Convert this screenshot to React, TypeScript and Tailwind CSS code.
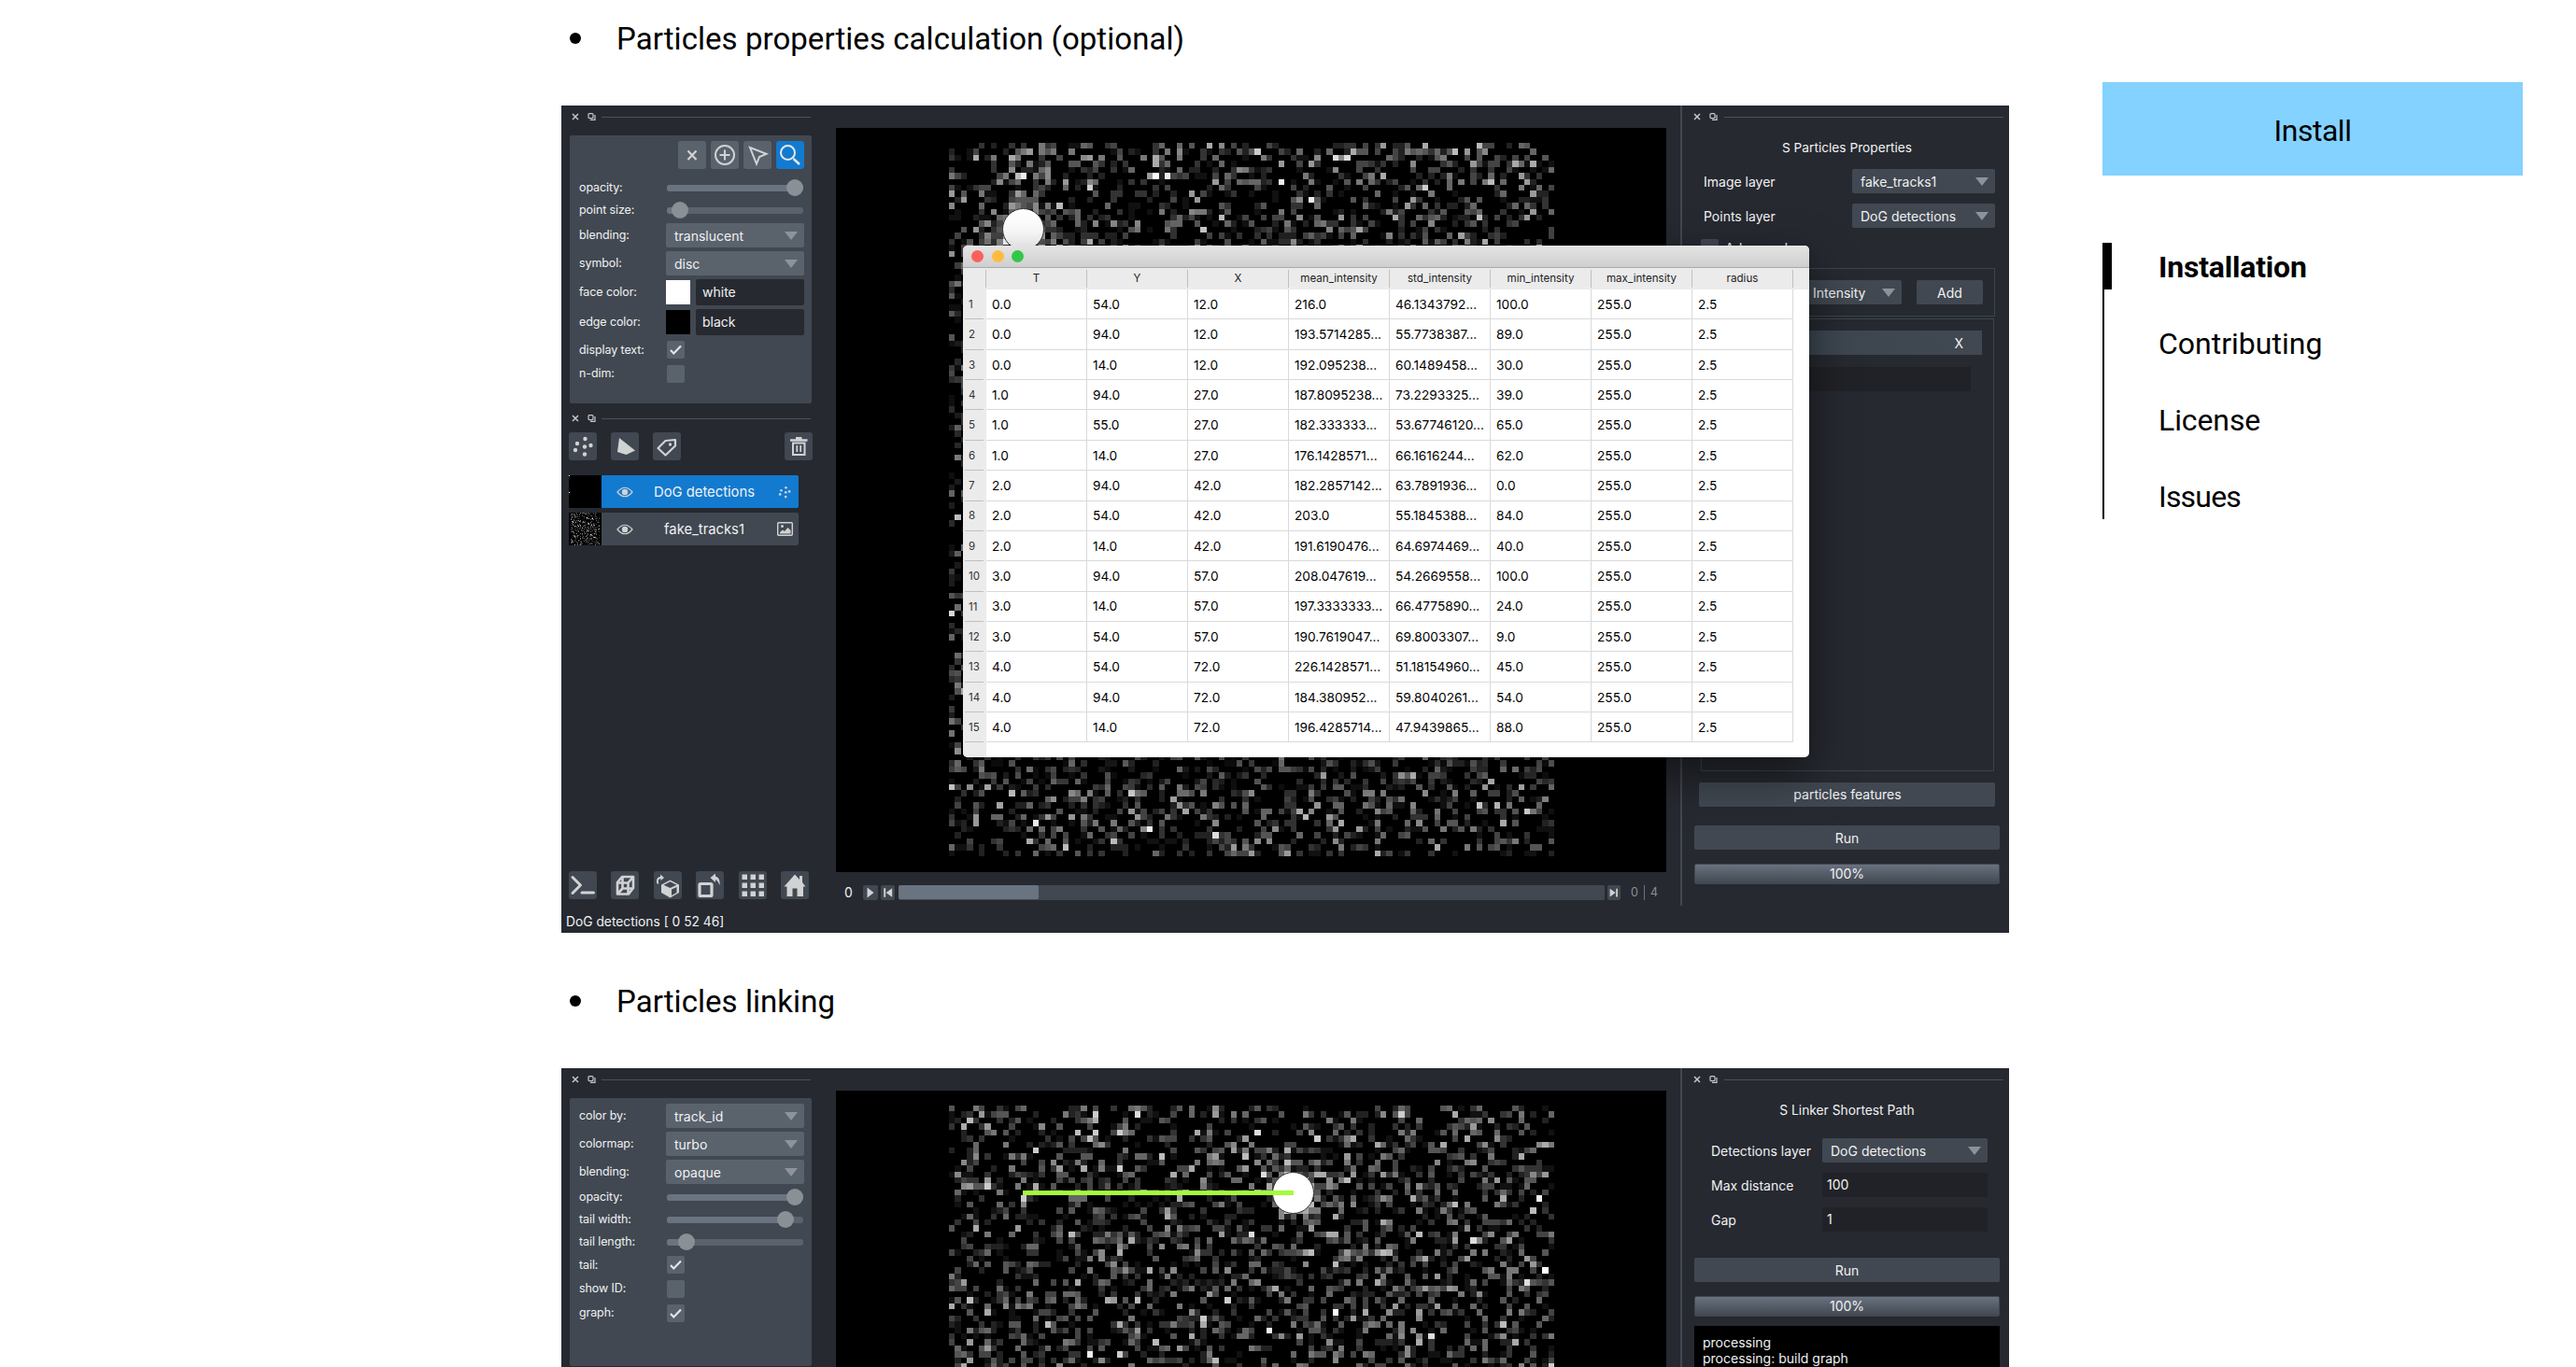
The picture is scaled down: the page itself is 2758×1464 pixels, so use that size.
import React from "react";

/* ---------- noise image ---------- */

function mulberry(seed: number) {
  let a = seed;
  return () => {
    a = (a + 0x6d2b79f5) | 0;
    let t = Math.imul(a ^ (a >>> 15), 1 | a);
    t = (t + Math.imul(t ^ (t >>> 7), 61 | t)) ^ t;
    return ((t ^ (t >>> 14)) >>> 0) / 4294967296;
  };
}

type Spot = [number, number];

function Noise({ seed, cols, rows, spots, className }: { seed: number; cols: number; rows: number; spots: Spot[]; className: string }) {
  const rand = mulberry(seed);
  const levels: string[] = Array.from({ length: 16 }, () => "");
  for (let y = 0; y < rows; y++) {
    for (let x = 0; x < cols; x++) {
      const n = Math.sqrt(-2 * Math.log(rand() + 1e-9)) * Math.cos(2 * Math.PI * rand());
      let v = n * 74 + 4;
      for (const [sx, sy] of spots) {
        const d2 = (x - sx) ** 2 + (y - sy) ** 2;
        v += 210 * Math.exp(-d2 / 16);
      }
      const l = Math.min(15, Math.floor(v / 16));
      if (l > 0) levels[l] += `M${x} ${y}h1v1h-1z`;
    }
  }
  return (
    <svg className={className} viewBox={`0 0 ${cols} ${rows}`} preserveAspectRatio="none" shapeRendering="crispEdges">
      {levels.map((d, i) => (d ? <path key={i} d={d} fill={`rgb(${i * 17},${i * 17},${i * 17})`} /> : null))}
    </svg>
  );
}

/* ---------- icons, all on a 30 x 30 grid ---------- */

const I = "block size-[30px] shrink-0";
const FG = "#d1d2d4";

const CrossIcon = () => (
  <svg className={I} viewBox="0 0 30 30"><path d="M10.500 10.500l9 9.500M19.500 10.500l-9 9.500" stroke={FG} strokeWidth="2.200" fill="none" /></svg>
);
const PlusIcon = () => (
  <svg className={I} viewBox="0 0 30 30"><circle cx="15" cy="15" r="10" stroke={FG} strokeWidth="2" fill="none" /><path d="M15 9.500v11M9.500 15h11" stroke={FG} strokeWidth="2" /></svg>
);
const ArrowIcon = () => (
  <svg className={I} viewBox="0 0 30 30"><path d="M7 7l17.500 6.800-7.500 3.200-3 7.500z" stroke={FG} strokeWidth="2" fill="none" /></svg>
);
const SearchIcon = () => (
  <svg className={I} viewBox="0 0 30 30"><circle cx="12.500" cy="12.500" r="7.500" stroke="#e8e9ea" strokeWidth="2" fill="none" /><path d="M18.500 19l6.500 6" stroke="#e8e9ea" strokeWidth="2.400" /></svg>
);
const DotsIcon = ({ size = I }: { size?: string }) => (
  <svg className={size} viewBox="0 0 30 30" fill={FG}>
    <circle cx="17.500" cy="7" r="2.200" /><circle cx="9" cy="12" r="2.200" /><circle cx="17" cy="15.500" r="2.200" />
    <circle cx="23.500" cy="14" r="2.200" /><circle cx="7" cy="19" r="2.200" /><circle cx="17" cy="23.500" r="2.200" />
  </svg>
);
const ShapeIcon = () => (
  <svg className={I} viewBox="0 0 30 30"><path d="M9 6L26 19.500 16.500 24 7 21z" fill={FG} /></svg>
);
const TagIcon = () => (
  <svg className={I} viewBox="0 0 30 30"><path d="M5.500 17L13.500 9l10.500-1v6.500L13.500 24.500z" stroke={FG} strokeWidth="2.200" fill="none" strokeLinejoin="round" /><circle cx="18.500" cy="13" r="1.700" fill={FG} /></svg>
);
const TrashIcon = () => (
  <svg className={I} viewBox="0 0 30 30" fill="none" stroke={FG}><path d="M6 8.500h18.500M12 6.300h6.500" strokeWidth="2.400" /><path d="M9 11.500h12.500v12.500h-12.500z" strokeWidth="2" /><path d="M13.300 14v7M17.200 14v7" strokeWidth="1.800" /></svg>
);
const ConsoleIcon = () => (
  <svg className={I} viewBox="0 0 30 30" fill="none" stroke={FG} strokeWidth="3"><path d="M4 6.500l8.500 8.500L4 23.500M14 23h12.500" strokeLinecap="round" strokeLinejoin="round" /></svg>
);
const Cube3dIcon = () => (
  <svg className={I} viewBox="0 0 30 30" fill="none" stroke={FG} strokeWidth="2.600" strokeLinejoin="round"><path d="M7 12L12 6h12v12l-5 6.500H7zM7 12.500h11.500v12M18.500 12.500L24 6M12.500 6v12.500H24M12.500 18.500L7 24.500" /></svg>
);
const RollIcon = () => (
  <svg className={I} viewBox="0 0 30 30"><path d="M8 14.500l9.500-5 9.500 5v8.500L17.500 28.500 8 23z" fill={FG} /><path d="M10.500 14.800l7-3.500 7 3.500-7 3.300z" fill="#414851" /><path d="M19 19.500l5.500-2.500v6L19 26z" fill="#414851" /><path d="M3.500 13.500C2 9 4 6 7 6V3.500L11 7 7.500 10V8C5 8.500 4.200 10 5.500 13.500z" fill={FG} /></svg>
);
const TransposeIcon = () => (
  <svg className={I} viewBox="0 0 30 30"><rect x="4" y="13.500" width="13" height="13" rx="1" stroke={FG} strokeWidth="3.200" fill="none" /><path d="M15.500 7L21 2.500v3c4 1 5 5 4.500 9.500C24 11.500 23 9.500 21 9v3z" fill={FG} /></svg>
);
const GridIcon = () => (
  <svg className={I} viewBox="0 0 30 30" fill={FG}>
    {[3.5, 12.5, 21.5].map((y) => [3.5, 12.5, 21.5].map((x) => <rect key={`${x}-${y}`} x={x} y={y} width="5.500" height="5.500" />))}
  </svg>
);
const HomeIcon = () => (
  <svg className={I} viewBox="0 0 30 30"><path d="M15 3.500l5 5.500V5h3v7l3.500 4.500H24V27h-6.500v-8.500h-5V27H6.500V16.500H3.500z" fill={FG} /></svg>
);
const EyeIcon = () => (
  <svg className="block h-[12px] w-[18px]" viewBox="0 0 18 12"><path d="M1 6Q9-3.500 17 6 9 15.500 1 6z" fill="none" stroke={FG} strokeWidth="1.200" /><circle cx="9" cy="6" r="3.200" fill={FG} /></svg>
);
const ImageIcon = () => (
  <svg className="block h-[15px] w-[17px]" viewBox="0 0 17 15"><rect x=".7" y=".7" width="15.600" height="13.600" rx="1" fill="none" stroke={FG} strokeWidth="1.400" /><path d="M3 12.500V11l3-2.500 2 1.500 3.500-4L14.500 9v3.500z" fill={FG} /><circle cx="5.500" cy="4.500" r="1.500" fill={FG} /></svg>
);
const Check = ({ on }: { on?: boolean }) => (
  <div className="ml-px size-[19px] rounded-[2px] bg-[#5a626c]">
    {on && <svg className="block size-[19px]" viewBox="0 0 19 19"><path d="M4 10l3.300 3.500L15 5.500" fill="none" stroke="#e4e5e6" strokeWidth="2.200" /></svg>}
  </div>
);

/* ---------- shared widgets ---------- */

function DockTitle({ className, line }: { className: string; line: string }) {
  return (
    <div className={`flex h-[24px] items-center ${className}`}>
      <svg className="block h-[10px] w-[30px] shrink-0" viewBox="0 0 30 10" fill="none" stroke="#c6c8ca">
        <path d="M1 2l6 6M7 2l-6 6" strokeWidth="1.500" />
        <rect x="18" y="1.600" width="5" height="5" rx="1" strokeWidth="1.200" />
        <path d="M20 8.400h5v-5.400" strokeWidth="1.200" />
      </svg>
      <div className={`h-px bg-[#4a515b] ${line}`} />
    </div>
  );
}

function Select({ children, className }: { children: React.ReactNode; className: string }) {
  return (
    <div className={`flex h-[26px] items-center justify-between rounded-[2px] pl-[9px] pr-[7px] text-[14px] ${className}`}>
      <span className="pt-px">{children}</span>
      <svg className="block h-[9px] w-[14px]" viewBox="0 0 14 9"><path d="M0 0h14L7 9z" fill="#8e9399" /></svg>
    </div>
  );
}

function Slider({ fill }: { fill: string }) {
  return (
    <div className="ml-px flex h-[7px] w-[146px] items-center rounded-[3px] bg-[#5a626c]">
      <div className={`h-[7px] rounded-l-[3px] bg-[#6a7380] ${fill}`} />
      <div className="-ml-[9px] size-[18px] shrink-0 rounded-full bg-[#899096]" />
    </div>
  );
}

function Field({ label, h, children }: { label: string; h: string; children: React.ReactNode }) {
  return (
    <div className={`flex items-center pl-[10px] ${h}`}>
      <span className="w-[93px] pt-px text-[12.500px] tracking-[-0.100px]">{label}</span>
      {children}
    </div>
  );
}

function ColorInput({ swatch, name }: { swatch: string; name: string }) {
  return (
    <>
      <div className={`size-[26px] ${swatch}`} />
      <div className="ml-[6px] flex h-[28px] w-[116px] items-center rounded-[2px] bg-[#262930] pl-[7px] text-[14px]">{name}</div>
    </>
  );
}

function Tool({ children, className = "" }: { children: React.ReactNode; className?: string }) {
  return <div className={`size-[30px] shrink-0 rounded-[3px] ${className}`}>{children}</div>;
}

function AppFrame({ children, className = "h-[886px]" }: { children: React.ReactNode; className?: string }) {
  return <div className={`relative flex w-[1550px] shrink-0 bg-[#262930] font-['Inter',sans-serif] leading-none text-[#f0f1f2] ${className}`}>{children}</div>;
}

/* ---------- result table ---------- */

const heads = ["T", "Y", "X", "mean_intensity", "std_intensity", "min_intensity", "max_intensity", "radius"];
const data = [
  ["0.0", "54.0", "12.0", "216.0", "46.1343792...", "100.0"],
  ["0.0", "94.0", "12.0", "193.5714285...", "55.7738387...", "89.0"],
  ["0.0", "14.0", "12.0", "192.095238...", "60.1489458...", "30.0"],
  ["1.0", "94.0", "27.0", "187.8095238...", "73.2293325...", "39.0"],
  ["1.0", "55.0", "27.0", "182.333333...", "53.67746120...", "65.0"],
  ["1.0", "14.0", "27.0", "176.1428571...", "66.1616244...", "62.0"],
  ["2.0", "94.0", "42.0", "182.2857142...", "63.7891936...", "0.0"],
  ["2.0", "54.0", "42.0", "203.0", "55.1845388...", "84.0"],
  ["2.0", "14.0", "42.0", "191.6190476...", "64.6974469...", "40.0"],
  ["3.0", "94.0", "57.0", "208.047619...", "54.2669558...", "100.0"],
  ["3.0", "14.0", "57.0", "197.3333333...", "66.4775890...", "24.0"],
  ["3.0", "54.0", "57.0", "190.7619047...", "69.8003307...", "9.0"],
  ["4.0", "54.0", "72.0", "226.1428571...", "51.18154960...", "45.0"],
  ["4.0", "94.0", "72.0", "184.380952...", "59.8040261...", "54.0"],
  ["4.0", "14.0", "72.0", "196.4285714...", "47.9439865...", "88.0"],
];

function TableWindow() {
  return (
    <div className="absolute left-[430px] top-[150px] h-[548px] w-[906px] overflow-hidden rounded-[5px] bg-white text-black">
      <div className="flex h-[24px] items-center gap-[8.500px] border-b border-[#a9a9a9] bg-linear-to-b from-[#e4e4e4] to-[#cfcfcf] pl-[9px]">
        <div className="size-[13px] rounded-full bg-[#fc605c]" />
        <div className="size-[13px] rounded-full bg-[#fdbc40]" />
        <div className="size-[13px] rounded-full bg-[#33c748]" />
      </div>
      <div className="flex h-[23px] items-center bg-[#ebebeb] pl-[24px] text-[11.600px] text-[#222]">
        {heads.map((h) => (
          <div key={h} className="flex h-[19px] w-[108px] items-center justify-center border-l border-[#c0c0c0] pt-px">{h}</div>
        ))}
        <div className="h-[19px] border-l border-[#c0c0c0]" />
      </div>
      {data.map((r, i) => (
        <div key={i} className="flex h-[32.360px]">
          <div className="flex w-[25px] items-center justify-start bg-[#ebebeb] pl-[2px]">
            <div className="flex h-full w-[20px] items-center border-b border-[#c0c0c0] pl-[4px] pt-[2px] text-[11.500px] text-[#333]">{i + 1}</div>
          </div>
          {[...r, "255.0", "2.5"].map((c, j) => (
            <div key={j} className="flex w-[108px] items-center border-b border-r border-[#dadada] pl-[6px] pt-[2px] text-[13.700px]">{c}</div>
          ))}
        </div>
      ))}
      <div className="h-[20px] w-[25px] bg-[#ebebeb]" />
    </div>
  );
}

/* ---------- left docks ---------- */

function LeftDockPoints() {
  return (
    <div className="flex w-[294px] shrink-0 flex-col">
      <DockTitle className="pl-[11px]" line="ml-[2px] w-[224px]" />
      <div className="ml-[9px] mt-[8px] h-[287px] w-[259px] shrink-0 rounded-[2px] bg-[#414851]">
        <div className="flex justify-end gap-[5px] pr-[8px] pt-[6px]">
          <Tool className="bg-[#5a626c]"><CrossIcon /></Tool>
          <Tool className="bg-[#5a626c]"><PlusIcon /></Tool>
          <Tool className="bg-[#5a626c]"><ArrowIcon /></Tool>
          <Tool className="bg-[#127acf]"><SearchIcon /></Tool>
        </div>
        <div className="mt-[8px]">
          <Field label="opacity:" h="h-[24px]"><Slider fill="w-[137px]" /></Field>
          <Field label="point size:" h="h-[24px]"><Slider fill="w-[14px]" /></Field>
          <Field label="blending:" h="h-[30px]"><Select className="w-[148px] bg-[#5a626c]">translucent</Select></Field>
          <Field label="symbol:" h="h-[30px]"><Select className="w-[148px] bg-[#5a626c]">disc</Select></Field>
          <Field label="face color:" h="h-[32px]"><ColorInput swatch="bg-white" name="white" /></Field>
          <Field label="edge color:" h="h-[32px]"><ColorInput swatch="bg-black" name="black" /></Field>
          <Field label="display text:" h="h-[27px]"><Check on /></Field>
          <Field label="n-dim:" h="h-[24px]"><Check /></Field>
        </div>
      </div>
      <DockTitle className="mt-[4px] pl-[11px]" line="ml-[2px] w-[224px]" />
      <div className="ml-[8px] mt-[3px] flex w-[261px] gap-[15px]">
        <Tool className="bg-[#414851]"><DotsIcon /></Tool>
        <Tool className="bg-[#414851]"><ShapeIcon /></Tool>
        <Tool className="bg-[#414851]"><TagIcon /></Tool>
        <Tool className="ml-auto bg-[#414851]"><TrashIcon /></Tool>
      </div>
      <div className="ml-[8px] mt-[16px] flex w-[246px] flex-col gap-[5px] text-[14.800px]">
        <div className="flex h-[35px]">
          <div className="w-[35px] bg-black"><div className="size-px bg-white" /><div className="mt-[17px] size-px bg-white" /></div>
          <div className="flex flex-1 items-center rounded-r-[2px] bg-[#127acf] pl-[16px] pr-[6px]">
            <EyeIcon />
            <span className="flex-1 pr-px pt-px text-center">DoG detections</span>
            <DotsIcon size="block size-[18px]" />
          </div>
        </div>
        <div className="flex h-[35px]">
          <div className="w-[35px] bg-black px-[2px]"><Noise seed={5} cols={31} rows={35} spots={[]} className="block h-[35px] w-[31px]" /></div>
          <div className="flex flex-1 items-center rounded-r-[2px] bg-[#414851] pl-[16px] pr-[6px]">
            <EyeIcon />
            <span className="flex-1 pr-[2px] pt-px text-center">fake_tracks1</span>
            <ImageIcon />
          </div>
        </div>
      </div>
      <div className="ml-[8px] mt-auto flex gap-[15.400px]">
        <Tool className="bg-[#414851]"><ConsoleIcon /></Tool>
        <Tool className="bg-[#414851]"><Cube3dIcon /></Tool>
        <Tool className="bg-[#414851]"><RollIcon /></Tool>
        <Tool className="bg-[#414851]"><TransposeIcon /></Tool>
        <Tool className="bg-[#414851]"><GridIcon /></Tool>
        <Tool className="bg-[#414851]"><HomeIcon /></Tool>
      </div>
      <div className="flex h-[36px] items-center pl-[5px] pt-[13px] text-[13.800px]">DoG detections [ 0 52 46]</div>
    </div>
  );
}

function LeftDockTracks() {
  return (
    <div className="flex w-[294px] shrink-0 flex-col">
      <DockTitle className="pl-[11px]" line="ml-[2px] w-[224px]" />
      <div className="ml-[9px] mt-[8px] h-[287px] w-[259px] rounded-[2px] bg-[#414851] pt-[4px]">
        <Field label="color by:" h="h-[30px]"><Select className="w-[148px] bg-[#5a626c]">track_id</Select></Field>
        <Field label="colormap:" h="h-[30px]"><Select className="w-[148px] bg-[#5a626c]">turbo</Select></Field>
        <Field label="blending:" h="h-[30px]"><Select className="w-[148px] bg-[#5a626c]">opaque</Select></Field>
        <Field label="opacity:" h="h-[24px]"><Slider fill="w-[137px]" /></Field>
        <Field label="tail width:" h="h-[24px]"><Slider fill="w-[127px]" /></Field>
        <Field label="tail length:" h="h-[24px]"><Slider fill="w-[21px]" /></Field>
        <Field label="tail:" h="h-[25px]"><Check on /></Field>
        <Field label="show ID:" h="h-[26px]"><Check /></Field>
        <Field label="graph:" h="h-[26px]"><Check on /></Field>
      </div>
    </div>
  );
}

/* ---------- right docks ---------- */

function RightDockProperties() {
  return (
    <div className="flex w-[349px] shrink-0 flex-col text-[14px]">
      <DockTitle className="pl-[11px]" line="ml-[3px] w-[299px]" />
      <div className="mt-[9px] flex h-[24px] items-center justify-center pl-[2px] pt-px text-[13.700px]">S Particles Properties</div>
      <div className="mt-[11px] flex items-center justify-between pl-[22px] pr-[15px]">
        <span className="pt-px">Image layer</span><Select className="w-[153px] bg-[#414851]">fake_tracks1</Select>
      </div>
      <div className="mt-[11px] flex items-center justify-between pl-[22px] pr-[15px]">
        <span className="pt-px">Points layer</span><Select className="w-[153px] bg-[#414851]">DoG detections</Select>
      </div>
      <div className="mt-[12px] flex items-center gap-[7px] pl-[19px]">
        <div className="size-[19px] rounded-[2px] bg-[#414851]" />
        <span>Advanced</span>
      </div>
      <div className="ml-[19px] mt-[12px] flex h-[52px] w-[315px] shrink-0 items-center justify-end gap-[16px] border border-[#3b454e] pr-[12px]">
        <Select className="w-[104px] bg-[#414851]">Intensity</Select>
        <div className="flex h-[26px] w-[71px] items-center justify-center rounded-[2px] bg-[#414851] pt-px">Add</div>
      </div>
      <div className="ml-[19px] mt-[2px] h-[485px] w-[314px] shrink-0 border border-[#3b454e]">
        <div className="mt-[12px] flex h-[26px] w-[300px] items-center justify-end bg-linear-to-r from-[#3a464f] to-[#414851] pr-[20px] pt-px">X</div>
        <div className="ml-[12px] mt-[13px] h-[26px] w-[276px] bg-[#212227]" />
      </div>
      <div className="ml-[17px] mt-[12px] flex h-[26px] w-[317px] shrink-0 items-center justify-center rounded-[2px] bg-[#414851] pl-px">particles features</div>
      <RunButtons className="mt-[20px]" />
    </div>
  );
}

function RunButtons({ className }: { className: string }) {
  return (
    <div className={`ml-[12px] w-[327px] ${className}`}>
      <div className="flex h-[26px] items-center justify-center rounded-[2px] bg-[#414851] pt-px">Run</div>
      <div className="mt-[15px] flex h-[22px] items-center justify-center rounded-[2px] border border-[#414851] bg-linear-to-b from-[#6a7280] to-[#414851]">100%</div>
    </div>
  );
}

function RightDockLinker() {
  return (
    <div className="flex w-[349px] shrink-0 flex-col text-[14px]">
      <DockTitle className="pl-[11px]" line="ml-[3px] w-[299px]" />
      <div className="mt-[9px] flex h-[24px] items-center justify-center pl-[2px] pt-px text-[13.800px]">S Linker Shortest Path</div>
      <div className="mt-[18px] flex items-center justify-between pl-[30px] pr-[23px]">
        <span className="pt-px">Detections layer</span><Select className="w-[177px] bg-[#414851]">DoG detections</Select>
      </div>
      <div className="mt-[11px] flex items-center justify-between pl-[30px] pr-[23px]">
        <span className="pt-px">Max distance</span><div className="flex h-[26px] w-[177px] items-center bg-[#212227] pl-[5px]">100</div>
      </div>
      <div className="mt-[11px] flex items-center justify-between pl-[30px] pr-[23px]">
        <span className="pt-px">Gap</span><div className="flex h-[26px] w-[177px] items-center bg-[#212227] pl-[5px]">1</div>
      </div>
      <RunButtons className="mt-[28px]" />
      <div className="ml-[12px] mt-[10px] w-[327px] flex-1 bg-black pl-[9px] pt-[9px] leading-[17px]">
        <div>processing</div>
        <div>processing: build graph</div>
      </div>
    </div>
  );
}

/* ---------- viewer ---------- */

const Mini = ({ d, className }: { d: string; className: string }) => (
  <div className={`h-[16px] rounded-[2px] bg-[#414851] ${className}`}>
    <svg className="block h-[16px] w-full" viewBox="0 0 16 16"><path d={d} fill="#d1d2d4" /></svg>
  </div>
);

function Canvas({ seed, spots, children }: { seed: number; spots: Spot[]; children: React.ReactNode }) {
  return (
    <div className="relative h-[797px] bg-black pl-[121px] pt-[16px]">
      <Noise seed={seed} cols={101} rows={119} spots={spots} className="block h-[764px] w-[648px]" />
      {children}
    </div>
  );
}

function FrameSlider() {
  return (
    <div className="mt-[14px] flex h-[16px] items-center text-[14px]">
      <span className="w-[29px] pl-[9px]">0</span>
      <Mini className="w-[16px]" d="M4.500 2.500l7 5.500-7 5.500z" />
      <Mini className="ml-[3px] w-[15px]" d="M3.500 3h2v10h-2zM13 3v10L6 8z" />
      <div className="ml-[4px] h-[16px] w-[756px] rounded-[2px] bg-[#414851]">
        <div className="h-[15px] w-[150px] rounded-[2px] bg-[#6a7380]" />
      </div>
      <Mini className="ml-[3px] w-[14px]" d="M12.500 3h-2v10h2zM3 3v10l7-5z" />
      <div className="flex items-center pl-[11px] text-[12.500px] text-[#8c9096]">
        <span>0</span><div className="mx-[6px] h-[16px] w-px bg-[#6a7280]" /><span>4</span>
      </div>
    </div>
  );
}

const Divider = ({ h = "h-[857px]" }: { h?: string }) => <div className={`ml-[15px] mr-[1px] w-[2px] shrink-0 bg-[#414851] ${h}`} />;

/* ---------- page ---------- */

function Bullet({ children, className }: { children: React.ReactNode; className: string }) {
  return (
    <div className={`flex items-center pl-[9px] ${className}`}>
      <div className="size-[12px] rounded-full bg-black" />
      <span className="ml-[38px] pt-[2px] text-[33px] leading-[40px] tracking-[0.050px]">{children}</span>
    </div>
  );
}

export default function App() {
  return (
    <div className="flex h-[1464px] w-[2758px] overflow-hidden bg-white font-['Roboto',sans-serif] text-black">
      <main className="ml-[601px] w-[1550px] shrink-0">
        <Bullet className="h-[113px] pb-[31px]">Particles properties calculation (optional)</Bullet>
        <AppFrame>
          <LeftDockPoints />
          <div className="w-[889px] shrink-0 pt-[24px]">
            <Canvas seed={11} spots={[[12, 14], [12, 54], [12, 94]]}>
              <div className="absolute left-[178px] top-[86px] size-[45px] rounded-full border border-[#333] bg-white" />
            </Canvas>
            <FrameSlider />
          </div>
          <Divider />
          <RightDockProperties />
          <div className="absolute left-[430px] top-[150px] h-[548px] w-[906px] rounded-[5px] shadow-[0_18px_50px_rgba(0,0,0,0.5)]" />
          <TableWindow />
        </AppFrame>
        <Bullet className="h-[145px]">Particles linking</Bullet>
        <AppFrame className="h-[320px] overflow-hidden">
          <LeftDockTracks />
          <div className="w-[889px] shrink-0 pt-[24px]">
            <Canvas seed={29} spots={[[57, 14], [57, 54], [57, 94]]}>
              <div className="absolute left-[467px] top-[87px] size-[45px] rounded-full border border-[#333] bg-white" />
              <div className="absolute left-[200px] top-[107px] h-[5px] w-[290px] bg-[#a4fc3c]" />
            </Canvas>
          </div>
          <Divider h="h-full" />
          <RightDockLinker />
        </AppFrame>
      </main>
      <aside className="ml-[100px] w-[450px] shrink-0 pt-[88px] text-[32px]">
        <div className="flex h-[100px] items-center justify-center bg-[#84d2ff] pt-[3px] tracking-[-0.500px]">Install</div>
        <nav className="mt-[72px] flex h-[296px]">
          <div className="w-[10px]">
            <div className="h-[50px] w-[10px] bg-black" />
            <div className="h-[246px] w-[2px] bg-black" />
          </div>
          <div className="ml-[50px] flex flex-col gap-[42px] leading-[40px]">
            <span className="mt-[6px] font-bold tracking-[-0.200px]">Installation</span>
            <span>Contributing</span>
            <span className="tracking-[-0.100px]">License</span>
            <span className="tracking-[-0.800px]">Issues</span>
          </div>
        </nav>
      </aside>
    </div>
  );
}
